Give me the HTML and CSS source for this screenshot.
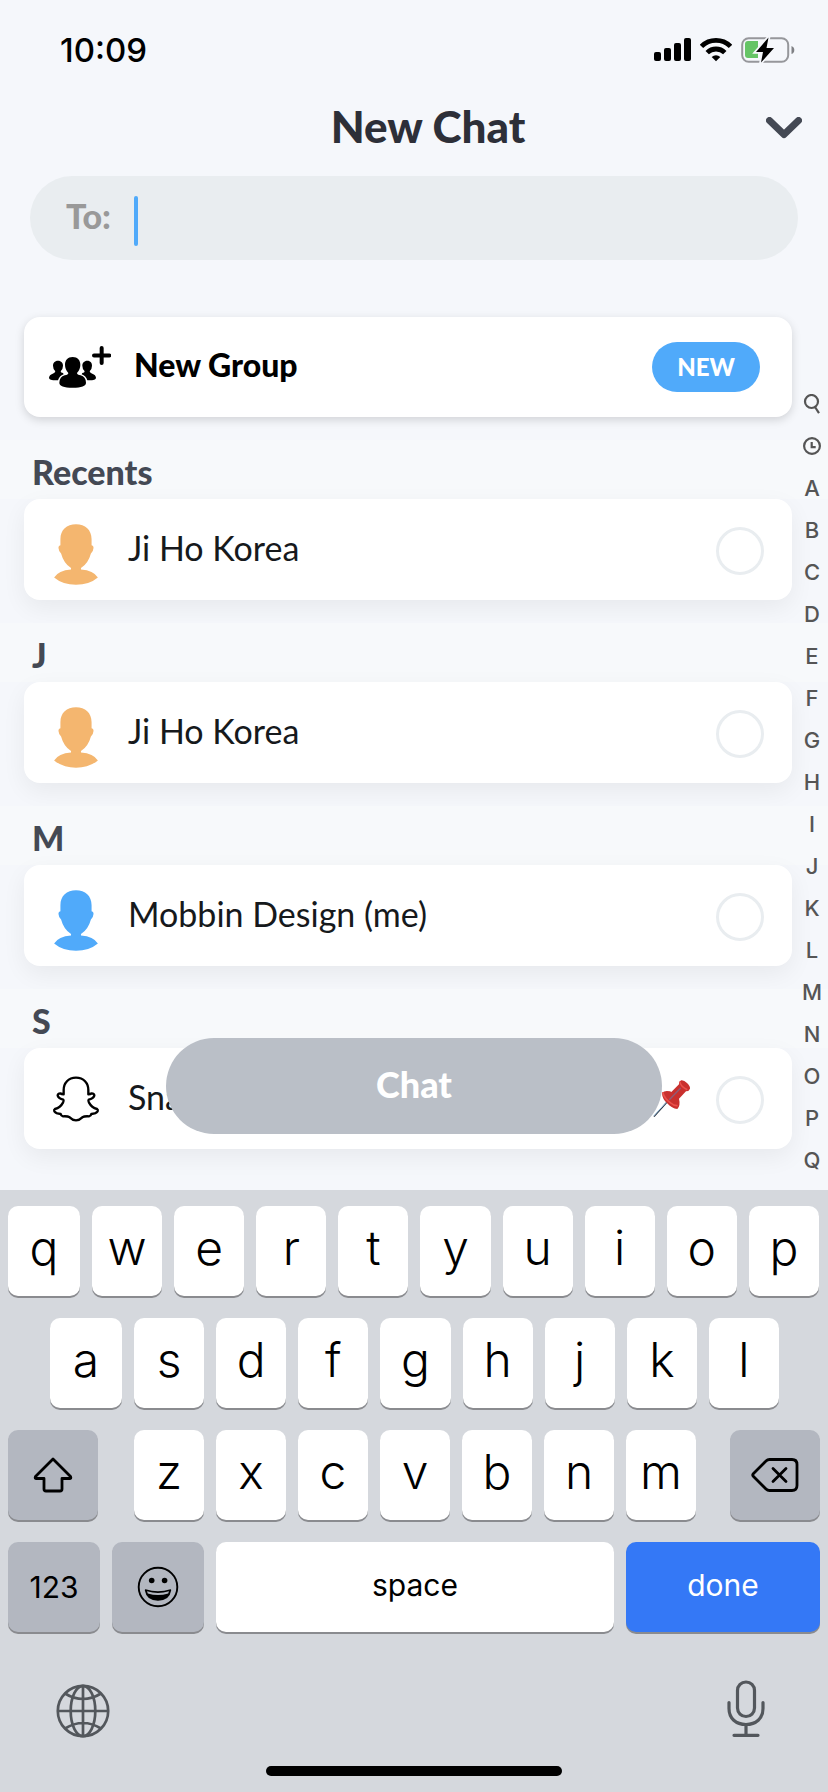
FILE: index.html
```html
<!DOCTYPE html>
<html lang="en">
<head>
<meta charset="utf-8">
<meta name="viewport" content="width=device-width">
<title>New Chat</title>
<link rel="stylesheet" href="styles.css">
</head>
<body>
<svg width="0" height="0" class="sprites" aria-hidden="true">
  <symbol id="person" viewBox="162 701 132 184">
    <path d="M228 702c28 0 47 17 47 45v18q6 1 6 8q-1 12-8 17q-8 30-30 44v4q38 3 51 24q-26 22-66 22t-66-22q13-21 51-24v-4q-22-14-30-44q-7-5-8-17q0-7 6-8v-18c0-28 19-45 47-45z" fill="currentColor"/>
  </symbol>
</svg>
<div class="screen">
  <header>
    <div class="status">
      <time class="clock">10:09</time>
      <div class="status-icons">
        <svg width="37" height="24" viewBox="0 0 37 24"><rect x="0" y="14" width="7" height="9" rx="2"/><rect x="10" y="10" width="7" height="13" rx="2"/><rect x="20" y="5" width="7" height="18" rx="2"/><rect x="30" y="0" width="7" height="23" rx="2"/></svg>
        <svg width="32" height="24" viewBox="0 0 32 24"><g fill="none" stroke="#000" stroke-width="4.8"><path d="M1.500 8.400a20.600 20.600 0 0 1 29 0"/><path d="M7.200 14.600a12.600 12.600 0 0 1 17.600 0"/></g><path d="M11.700 18.900a6.400 6.400 0 0 1 8.600 0L16 23.300z"/></svg>
        <svg width="54" height="26" viewBox="0 0 54 26"><rect x="1.200" y="1.200" width="46" height="23.600" rx="6.500" fill="none" stroke="#96979b" stroke-width="2"/><path d="M50.500 9v8q2.800-1 2.800-4t-2.800-4z" fill="#7f8084"/><path d="M7 4h10v17H7q-3 0-3-3V7q0-3 3-3z" fill="#65c466"/><path d="M27.500.5L15 15h7l-2 10.500L33 11h-7.500z" fill="#000" stroke="#f5f7fb" stroke-width="3.500" paint-order="stroke"/></svg>
      </div>
    </div>
    <div class="titlebar">
      <h1>New Chat</h1>
      <button class="close" aria-label="Close"><svg width="36" height="22" viewBox="0 0 36 22"><path d="M3.500 3.500L18 17.500L32.500 3.500" fill="none" stroke="#444954" stroke-width="7" stroke-linecap="round" stroke-linejoin="round"/></svg></button>
    </div>
    <div class="to-field">
      <label for="to">To:</label>
      <span class="caret"></span>
      <input id="to" type="text">
    </div>
  </header>

  <main>
    <button class="card new-group">
      <svg width="62" height="42" viewBox="147 168 186 126"><g fill="#000"><path d="M218 201c15 0 23 10 23 23q0 14-10 25q0 5 11 7q15 4 16 22q0 15-40 15t-40-15q1-18 16-22q11-2 11-7q-10-11-10-25c0-13 8-23 23-23z"/><path d="M174 212c10 0 15 7 15 15q0 10-7 17q0 5 7 5l2 4q-13 5-17 18q-27 1-27-8q1-9 11-12q7-1 8-7q-7-7-7-17c0-8 5-15 15-15z"/><path d="M262 212c-10 0-15 7-15 15q0 10 7 17q0 5-7 5l-2 4q13 5 17 18q26 1 26-8q-1-9-11-12q-7-1-8-7q7-7 7-17c0-8-4-15-14-15z"/></g><path d="M305 174v45M282 196.500h46" fill="none" stroke="#000" stroke-width="12" stroke-linecap="round"/></svg>
      <span class="group-label">New Group</span>
      <span class="badge">NEW</span>
    </button>

    <section>
      <h2>Recents</h2>
      <label class="card contact"><svg class="avatar orange"><use href="#person"/></svg><span class="name">Ji Ho Korea</span><input type="checkbox"></label>
    </section>
    <section>
      <h2>J</h2>
      <label class="card contact"><svg class="avatar orange"><use href="#person"/></svg><span class="name">Ji Ho Korea</span><input type="checkbox"></label>
    </section>
    <section>
      <h2>M</h2>
      <label class="card contact"><svg class="avatar blue"><use href="#person"/></svg><span class="name">Mobbin Design (me)</span><input type="checkbox"></label>
    </section>
    <section>
      <h2>S</h2>
      <label class="card contact"><svg class="ghost" viewBox="156 282 144 144"><path d="M228 290c-23 0-37 16-37 37v13q-6-1-10-3q-8 0-8 7q3 9 17 12q2 3-1 9q-8 15-24 19q-4 3-2 7q5 7 19 8q1 6 7 7q14-1 20 3q9 9 19 9t19-9q6-4 20-3q6-1 7-7q14-1 19-8q2-4-2-7q-16-4-24-19q-3-6-1-9q14-3 17-12q0-7-8-7q-4 2-10 3v-13c0-21-14-37-37-37z" fill="#fff" stroke="#000" stroke-width="7" stroke-linejoin="round"/></svg><span class="name">Snapchat</span>
        <svg class="pin" viewBox="735 293 117 117"><path d="M738 406l50-56" stroke="#28303c" stroke-width="4"/><path d="M737 404l48-52" stroke="#9bc9ec" stroke-width="2.500"/><path d="M762 334q9-8 24-4l4 2l23-23q-1-9 7-12q8-1 17 8q10 9 9 17q-3 8-12 8l-21 22q5 20-5 31q-17-3-29-16q-17-14-17-33z" fill="#c9302e"/><path d="M764 333q6 20 24 32q10 9 21 8M815 301q3 15 23 24" fill="none" stroke="#e9504b" stroke-width="5"/><path d="M784 355l34-35" stroke="#8e5e78" stroke-width="4"/></svg>
        <input type="checkbox"></label>
    </section>

    <nav class="index" aria-label="Alphabet">
      <a href="#" aria-label="Search"><svg width="18" height="20" viewBox="0 0 18 20"><circle cx="8.500" cy="7.500" r="6.500"/><path d="M12 13L16 19.200"/></svg></a>
      <a href="#" aria-label="Recents"><svg width="18" height="18" viewBox="0 0 18 18"><circle cx="9" cy="9" r="7.900"/><path d="M8.700 5v5.200h4"/></svg></a>
      <a href="#">A</a><a href="#">B</a><a href="#">C</a><a href="#">D</a><a href="#">E</a><a href="#">F</a><a href="#">G</a><a href="#">H</a><a href="#">I</a><a href="#">J</a><a href="#">K</a><a href="#">L</a><a href="#">M</a><a href="#">N</a><a href="#">O</a><a href="#">P</a><a href="#">Q</a>
    </nav>
    <button class="chat">Chat</button>
  </main>

  <div class="keyboard">
    <div class="row first"><button>q</button><button>w</button><button>e</button><button>r</button><button>t</button><button>y</button><button>u</button><button>i</button><button>o</button><button>p</button></div>
    <div class="row inset"><button>a</button><button>s</button><button>d</button><button>f</button><button>g</button><button>h</button><button>j</button><button>k</button><button>l</button></div>
    <div class="row third">
      <button class="gray side" aria-label="Shift"><svg width="40" height="36" viewBox="0 0 40 36"><path d="M20 2L2.500 19.500q-1 2 1 2H11V32q0 2 2 2h14q2 0 2-2V21.500h7.500q2 0 1-2z" fill="none" stroke="#000" stroke-width="2.800" stroke-linejoin="round"/></svg></button>
      <div class="letters"><button>z</button><button>x</button><button>c</button><button>v</button><button>b</button><button>n</button><button>m</button></div>
      <button class="gray side" aria-label="Delete"><svg width="48" height="36" viewBox="0 0 48 36"><g fill="none" stroke="#000" stroke-width="2.800" stroke-linecap="round" stroke-linejoin="round"><path d="M18.500 2.500H41q5 0 5 5v21q0 5-5 5H18.500q-2 0-3.500-1.500L2.500 19.500q-1.500-1.500 0-3L15 4q1.500-1.500 3.500-1.500z"/><path d="M22 11.500L35 24.500M35 11.500L22 24.500"/></g></svg></button>
    </div>
    <div class="row bottom">
      <button class="gray mode">123</button>
      <button class="gray mode" aria-label="Emoji"><svg width="42" height="42" viewBox="0 0 42 42"><circle cx="21" cy="21" r="19.300" fill="none" stroke="#000" stroke-width="1.900"/><circle cx="14.700" cy="14.500" r="2.800"/><circle cx="27.600" cy="14.500" r="2.800"/><path d="M8.600 23.200q12.400 4 24.800 0q.8 0 .8 1q-1.700 10.500-13.200 10.500T7.800 24.200q0-1 .8-1z"/><path d="M10 25.200q11 3.400 22 0l-.8 2.300q-10.200 3-20.400 0z" fill="#b3b7c0"/></svg></button>
      <button class="space">space</button>
      <button class="done">done</button>
    </div>
    <div class="tools">
      <button class="globe" aria-label="Next keyboard"><svg width="54" height="54" viewBox="0 0 54 54"><g fill="none" stroke="#53575c" stroke-width="2.700"><circle cx="27" cy="27" r="25.200"/><ellipse cx="27" cy="27" rx="12.300" ry="25.200"/><path d="M27 2v50M2 27h50M9 9.500q18 11 36 0M9 44.500q18-11 36 0"/></g></svg></button>
      <button aria-label="Dictate"><svg width="38" height="58" viewBox="0 0 38 58"><g fill="none" stroke="#53575c" stroke-width="3.200" stroke-linecap="round"><rect x="10.500" y="2" width="17" height="34.500" rx="8.500"/><path d="M2 22.500v6c0 10 7 16 17 16s17-6 17-16v-6M19 45v10M7 55.300h24"/></g></svg></button>
    </div>
    <div class="home"></div>
  </div>
</div>
</body>
</html>
```
FILE: styles.css
```css
* { box-sizing: border-box; }
body { margin: 0; background: #f5f7fb; font-family: Lato, "Open Sans", sans-serif; color: #16191c; }
button { border: 0; margin: 0; padding: 0; background: none; font: inherit; color: inherit; }
svg { display: block; flex: none; }
.sprites { position: absolute; }
.screen { min-height: 100vh; display: flex; flex-direction: column; }

.status { height: 100px; display: flex; align-items: center; justify-content: space-between; padding: 0 33px 0 60px; }
.clock { font: 500 33px/40px Inter, sans-serif; color: #000; }
.status-icons { display: flex; align-items: center; gap: 9px; }

.titlebar { display: grid; grid-template-columns: 90px 1fr 36px; align-items: center; height: 52px; padding-right: 26px; }
h1 { grid-column: 2; margin: 0; text-align: center; font-size: 44px; line-height: 52px; font-weight: 900; color: #2d2f38; }
.close { padding-top: 4px; }

.to-field { display: flex; align-items: center; height: 84px; margin: 24px 30px 57px; padding: 0 36px; border-radius: 42px; background: #e9edf0; }
.to-field label { width: 68px; padding-bottom: 4px; font-size: 34px; line-height: 40px; font-weight: 900; color: #999; }
.caret { width: 4px; height: 50px; margin-top: 6px; border-radius: 2px; background: #50aafa; }
.to-field input { flex: 1; min-width: 0; border: 0; outline: 0; background: none; font-size: 34px; }

main { position: relative; flex: 1; padding-bottom: 41px; }
.card { display: flex; align-items: center; margin: 0 36px 0 24px; border-radius: 16px; background: #fff; text-align: left; }
.new-group { width: calc(100% - 60px); height: 100px; margin-bottom: 23px; padding: 0 32px 0 25px; box-shadow: 0 3px 10px rgba(0, 0, 0, .15); color: #000; }
.group-label { flex: 1; margin-left: 23px; padding-bottom: 4px; font-size: 32px; line-height: 40px; font-weight: 900; }
.badge { padding: 0 25px; border-radius: 25px; background: #50aafa; color: #fff; font-size: 24px; line-height: 50px; font-weight: 900; }

section { margin-bottom: 23px; }
section:last-of-type { margin-bottom: 0; }
h2 { margin: 0; height: 59px; padding: 11px 32px 0; font-size: 34px; line-height: 42px; font-weight: 900; color: #444954; background: #f7f9fb; }
.contact { height: 101px; padding: 0 28px 0 30px; box-shadow: 0 8px 24px rgba(0, 0, 0, .06); }
.avatar { width: 44px; height: 61px; margin-top: 10px; }
.orange { color: #f4b66f; }
.blue { color: #50aafa; }
.ghost { width: 48px; height: 48px; margin: 0 -2px; }
.name { flex: 1; margin-left: 30px; padding-bottom: 4px; font-size: 34px; line-height: 40px; }
.pin { width: 39px; height: 39px; margin-right: 24px; }
.contact input { appearance: none; flex: none; width: 48px; height: 48px; margin: 3px 0 0; border: 3px solid #e9edf0; border-radius: 50%; }

.index { position: absolute; top: 66px; right: 0; width: 32px; display: flex; flex-direction: column; }
.index a { display: flex; height: 42px; align-items: center; justify-content: center; font: 500 22px/40px Inter, sans-serif; color: #555; text-decoration: none; }
.index svg { fill: none; stroke: #555; stroke-width: 2.2; }

.chat { position: absolute; left: 20%; right: 20%; bottom: 56px; height: 96px; padding-bottom: 4px; border-radius: 48px; background: #babfc7; color: #fff; font-size: 36px; font-weight: 900; }

.keyboard { padding: 16px 8px; background: #d5d8dd; font-family: Inter, sans-serif; color: #000; }
.row, .letters { display: flex; gap: 12px; }
.row { margin-bottom: 22px; }
.row button { flex: 1; min-width: 0; display: flex; align-items: center; justify-content: center; height: 90px; padding-bottom: 8px; border-radius: 10px; background: #fff; box-shadow: 0 2px 0 #8a8b8f; font-size: 48px; font-weight: 300; }
.first { padding-right: 1px; }
.inset { padding: 0 41px 0 42px; }
.first button:first-child, .inset button:first-child { flex: 0 0 72px; }
.third { gap: 34px; }
.letters { flex: 1; margin-left: 2px; }
.row .gray { background: #b3b7c0; padding-bottom: 0; }
.row .side { flex: 0 0 90px; }
.bottom button { padding-bottom: 4px; font-size: 30px; font-weight: 400; }
.row .mode { flex: 0 0 92px; }
.row .space { flex: 2; }
.row .done { flex: 0 0 194px; background: #3478f6; color: #fff; }
.tools { display: flex; align-items: center; justify-content: space-between; height: 58px; margin: 48px 55px 28px 48px; }
.globe { padding-top: 4px; }
.home { width: 296px; height: 10px; margin: 0 auto; border-radius: 5px; background: #000; }
```
